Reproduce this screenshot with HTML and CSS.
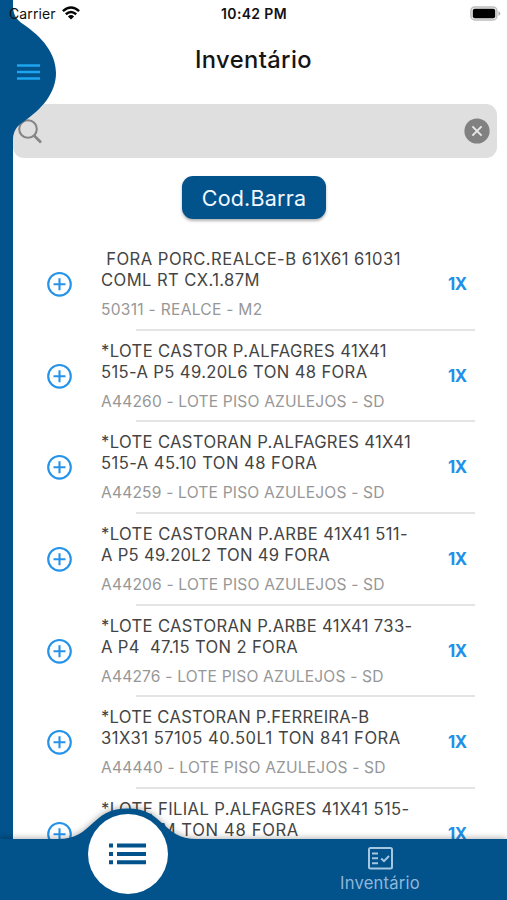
FILE: index.html
```html
<!DOCTYPE html>
<html lang="pt">
<head>
<meta charset="utf-8">
<title>Inventário</title>
<link rel="stylesheet" href="styles.css">
</head>
<body>
<div class="app">
  <svg class="drawer" width="60" height="900" viewBox="0 0 60 900">
    <path fill="#02528c" d="M0 0H13V6C13 15 17 20 23 24C42 37 56 53 56 73C56 93 42 109 23 122C17 126 13 131 13 140V900H0Z"/>
    <path stroke="#1da5ee" stroke-width="2.6" d="M17 65.5H40M17 72H40M17 78.5H40"/>
  </svg>
  <div class="status">
    <div class="carrier"><span>Carrier</span>
      <svg width="18" height="14" viewBox="0 0 18 14"><g fill="none" stroke="#050505" stroke-width="2.5"><path d="M.9 5.1Q9-2.1 17.1 5.1M3.8 8.2Q9 3.8 14.2 8.2"/></g><path d="M5.9 10.4Q9 7.8 12.1 10.4L9 13.6Z" fill="#050505"/></svg>
    </div>
    <div class="clock">10:42 PM</div>
    <svg class="battery" width="31" height="15" viewBox="0 0 31 15"><rect x=".9" y=".9" width="26" height="13" rx="4" fill="#eee" stroke="#bdbdbd" stroke-width="1.5"/><rect x="2.8" y="2.8" width="22.4" height="9.4" rx="2" fill="#000"/><path d="M28.5 5Q32 7.4 28.5 10Z" fill="#aaa"/></svg>
  </div>
  <h1 class="title">Inventário</h1>
  <div class="search">
    <svg width="24" height="25" viewBox="0 0 24 25" fill="none" stroke="#858585"><circle cx="10" cy="10" r="8.8" stroke-width="2.1"/><path d="M16 16.5L23 23.5" stroke-width="2.6"/></svg>
    <svg width="26" height="26" viewBox="0 0 26 26"><circle cx="13" cy="13" r="12.6" fill="#818181"/><path d="M8.4 8.4L17.6 17.6M17.6 8.4L8.4 17.6" stroke="#e8e8e8" stroke-width="2"/></svg>
  </div>
  <button class="scan">Cod.Barra</button>
  <ul class="list" id="list"></ul>
  <nav class="nav">
    <svg class="hump" width="507" height="100" viewBox="0 0 507 100"><path fill="#02528c" d="M0 39H58C94 39 90 8.5 127.5 8.5C165 8.5 161 39 197 39H507V100H0Z"/></svg>
    <div class="active"><svg width="37" height="22" viewBox="0 0 37 22"><path d="M0 2.6H4M8 2.6H37M0 11H4M8 11H37M0 19.3H4M8 19.3H37" stroke="#02528c" stroke-width="4"/></svg></div>
    <div class="tab">
      <svg width="25" height="23" viewBox="0 0 25 23" fill="none" stroke="#a5c7e2" stroke-width="2"><rect x="1" y="1" width="23" height="20.6" rx="1.5"/><path d="M4 6.5H10M4 11.3H10M4 16.2H10M13.2 11.5L16 14.2L21 9"/></svg>
      <span>Inventário</span>
    </div>
  </nav>
</div>
<script src="app.js"></script>
</body>
</html>
```
FILE: styles.css
```css
* { box-sizing: border-box; }
body { margin: 0; font-family: Inter, "Liberation Sans", sans-serif; background: #fff; }
.app { position: relative; width: 507px; height: 900px; overflow: hidden; padding-left: 13px; }
.drawer { position: absolute; left: 0; top: 0; z-index: 2; }
.status { position: relative; z-index: 3; height: 28px; margin-left: -13px; padding: 0 6px 0 9px; display: grid; grid-template-columns: 1fr auto 1fr; align-items: center; color: #111; }
.carrier { display: flex; align-items: center; gap: 6px; }
.carrier span { font-size: 14px; letter-spacing: .1px; margin-top: -1px; }
.carrier svg { margin-top: -3px; }
.clock { font-weight: 600; font-size: 14px; letter-spacing: .35px; margin: -2px 0 0 -2px; }
.battery { justify-self: end; margin-top: -1px; }
.title { margin: 0 0 0 -13px; height: 76px; line-height: 63px; text-align: center; font-size: 23.7px; font-weight: 450; color: #151515; letter-spacing: .4px; }
.search { height: 54px; margin-right: 10px; padding: 0 7px 0 5px; border-radius: 11px; background: #dfdfdf; display: flex; align-items: center; justify-content: space-between; }
.scan { display: block; width: 144px; height: 43px; margin: 18px 0 0 169px; padding: 0; border: 0; border-radius: 11px; background: #02528c; color: #f1f8ff; font: 400 21.5px Inter, "Liberation Sans", sans-serif; letter-spacing: .2px; box-shadow: 0 2px 3px rgba(0,0,0,.3); }
.list { margin: 19px 0 0; padding: 0; list-style: none; }
.row { position: relative; height: 91.65px; display: grid; grid-template-columns: 88px 1fr 60px; }
.row::after { content: ""; position: absolute; left: 123px; right: 32px; bottom: -1px; height: 2px; background: #e4e4e4; }
.plus { margin: 33px 0 0 34px; }
.name { margin-top: 11px; white-space: pre; font-size: 16.6px; line-height: 21px; color: #444; }
.line { display: block; width: max-content; }
.code { display: block; width: max-content; margin-top: 9px; line-height: 20px; font-size: 15.6px; color: #979797; }
.qty { margin: 36px 0 0 1px; line-height: 21px; font-size: 16.8px; font-weight: 700; letter-spacing: -.4px; color: #2290e8; }
.nav { position: absolute; left: 0; top: 800px; width: 507px; height: 100px; z-index: 4; }
.hump { display: block; filter: drop-shadow(0 -1px 3px rgba(0,0,0,.3)); }
.active { position: absolute; left: 87.5px; top: 14px; width: 80px; height: 80px; border-radius: 50%; background: #fff; display: flex; align-items: center; justify-content: center; }
.tab { position: absolute; left: 320px; top: 47px; width: 120px; display: flex; flex-direction: column; align-items: center; color: #8fb7da; font-size: 16.6px; line-height: 20px; gap: 3px; letter-spacing: .2px; }
```
FILE: app.js
```js
// Each entry: two name lines and the code line, each with its set width in px.
const items = [
  [[" FORA PORC.REALCE-B 61X61 61031", 300], ["COML RT CX.1.87M", 159], ["50311 - REALCE - M2", 161.5]],
  [["*LOTE CASTOR P.ALFAGRES 41X41", 286], ["515-A P5 49.20L6 TON 48 FORA", 266.5], ["A44260 - LOTE PISO AZULEJOS - SD", 283.7]],
  [["*LOTE CASTORAN P.ALFAGRES 41X41", 310], ["515-A 45.10 TON 48 FORA", 216.5], ["A44259 - LOTE PISO AZULEJOS - SD", 283.7]],
  [["*LOTE CASTORAN P.ARBE 41X41 511-", 307], ["A P5 49.20L2 TON 49 FORA", 229], ["A44206 - LOTE PISO AZULEJOS - SD", 283.7]],
  [["*LOTE CASTORAN P.ARBE 41X41 733-", 311.5], ["A P4  47.15 TON 2 FORA", 197], ["A44276 - LOTE PISO AZULEJOS - SD", 282.7]],
  [["*LOTE CASTORAN P.FERREIRA-B", 268.5], ["31X31 57105 40.50L1 TON 841 FORA", 299.7], ["A44440 - LOTE PISO AZULEJOS - SD", 284.7]],
  [["*LOTE FILIAL P.ALFAGRES 41X41 515-", 308.5], ["A 11.80M TON 48 FORA", 198], ["", 0]]
];
const line = (cls, [text, width]) => `<span class="${cls}" data-width="${width}">${text}</span>`;
document.getElementById("list").innerHTML = items.map(([a, b, c]) => `
  <li class="row">
    <svg class="plus" width="26" height="26" viewBox="0 0 26 26" fill="none" stroke="#2493e9" stroke-width="2.1"><circle cx="12.5" cy="13.3" r="11.3"/><path d="M12.5 7.3V19.3M6.5 13.3H18.5"/></svg>
    <div class="name">${line("line", a)}${line("line", b)}${line("code", c)}</div>
    <div class="qty">1X</div>
  </li>`).join("");

// Track each line out to its set width.
document.querySelectorAll("[data-width]").forEach((el) => {
  const count = el.textContent.length;
  if (!count) return;
  const spare = Number(el.dataset.width) - el.getBoundingClientRect().width;
  el.style.letterSpacing = `${spare / count}px`;
});
```
